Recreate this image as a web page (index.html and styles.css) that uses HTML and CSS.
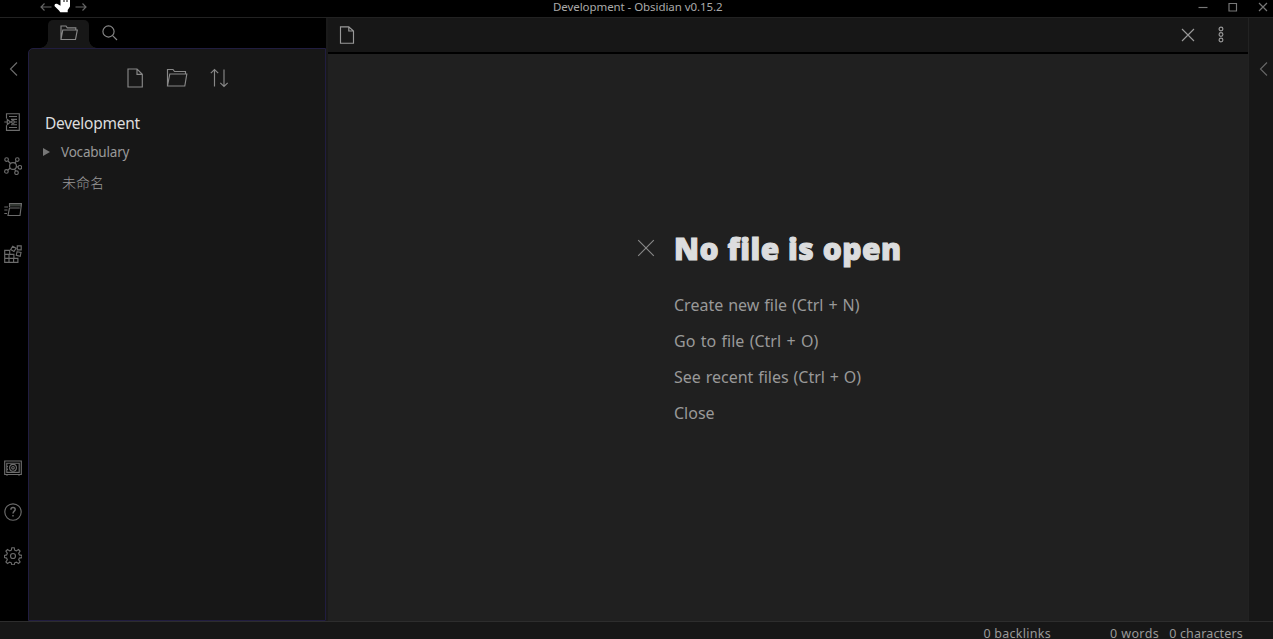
FILE: index.html
```
<!DOCTYPE html>
<html lang="en">
<head>
<meta charset="utf-8">
<title>Development - Obsidian v0.15.2</title>
<link rel="stylesheet" href="styles.css">
</head>
<body>
<div class="app">
  <header class="titlebar">
    <div class="nav">
      <svg width="12" height="10" viewBox="0 0 12 10"><path d="M11.5 5H1M4.500 1.500L1 5l3.500 3.500"/></svg>
      <svg width="12" height="10" viewBox="0 0 12 10"><path d="M.5 5H11M7.500 1.500L11 5 7.500 8.500"/></svg>
    </div>
    <div class="title"><span>Development - Obsidian v0.15.2</span></div>
    <div class="window-controls">
      <svg width="10" height="10" viewBox="0 0 10 10"><path d="M.5 5.500h9"/></svg>
      <svg width="10" height="10" viewBox="0 0 10 10"><path d="M1 1.500h7.500V9H1z"/></svg>
      <svg width="10" height="10" viewBox="0 0 10 10"><path d="M1 1l8 8M9 1L1 9"/></svg>
    </div>
  </header>
  <svg class="pointer" width="20" height="13" viewBox="0 0 20 13"><path d="M6.500 0H16v6.500l-2.300 3.500v2.200H6.300L5 10.500.7 6.200Q-.2 3.500 3 3.700l3.500 2z"/><path class="fingers" d="M10 0v2M13 0v2"/></svg>

  <div class="workspace">
    <nav class="ribbon">
      <svg class="collapse" width="9" height="14" viewBox="0 0 9 14"><path d="M8 .5L1.500 7 8 13.500"/></svg>
      <div class="group">
        <svg width="18" height="18" viewBox="0 0 18 18"><path d="M2.500 5.500V.7h12.800v16.600H2.500v-5M5 3.500h8M7 6.300h6M11 9h2M7 11.700h6M5 14.500h8M.3 9h3M3.300 6.500L6.500 9l-3.200 2.500zM6.500 9h1"/><circle cx="9" cy="9" r="1.400"/></svg>
        <svg width="18" height="18" viewBox="0 0 18 18"><circle cx="9" cy="9" r="3.400"/><circle cx="2.600" cy="2.500" r="1.800"/><circle cx="13.300" cy="2.500" r="1.800"/><circle cx="15.900" cy="10.300" r="1.800"/><circle cx="12.500" cy="15.700" r="1.800"/><circle cx="2.400" cy="14.400" r="1.800"/><path d="M4 4l2.500 2.500M12.300 4.200l-1.500 2M12.400 9.600l1.700.4M10.500 12l1.200 2M6.200 11l-2.500 2.200"/></svg>
        <svg width="18" height="18" viewBox="0 0 18 18"><path class="soft" d="M6 2.500h11.200v3H6z"/><path d="M5.500 6V2.500H17.500L16 14.500H4L5.500 7H15.800M.3 6h3.700M.3 9h3.200M.3 12.500h2.700"/></svg>
        <svg width="18" height="18" viewBox="0 0 18 18"><path d="M.7 5.300h5v4.100h4.200v4h4v4H.7zM.7 9.400h5M.7 13.400h9.200M5 9.400v8M9.600 13.400v4M8.700 1.200l3.300 2-2 3.300-3.300-2zM13.300.8h3.900v4h-3.900zM13 6.800l4 .7-.8 3.700-3.900-.8z"/></svg>
      </div>
      <div class="group lower">
        <svg width="18" height="18" viewBox="0 0 18 18"><path d="M.7 2h16.600v13.500H.7zM2.800 4.200h12.400v9.200H2.800zM3 15.500v1.300M15 15.500v1.300M2.800 7.500H4M2.800 10.300H4"/><circle cx="9" cy="8.800" r="3.400"/><circle cx="9" cy="8.800" r="1.300"/></svg>
        <svg width="18" height="18" viewBox="0 0 18 18"><circle cx="9" cy="9" r="8.200"/><path class="bold" d="M6.900 6.700c0-3 4.300-2.700 4.300-.3C11.200 8.200 9 8.100 9 10.500M9 12v1.500"/></svg>
        <svg width="18" height="18" viewBox="0 0 18 18"><path d="M7.800.7h2.400l.5 2.500 1.600.7 2.200-1.400 1.600 1.600-1.400 2.200.7 1.600 2.500.5v2.200l-2.500.5-.7 1.600 1.400 2.200-1.600 1.600-2.200-1.400-1.600.7-.5 2H7.800l-.5-2-1.600-.7-2.200 1.400-1.600-1.600 1.400-2.200-.7-1.600-2.200-.5V8.400l2.200-.5.7-1.600-1.400-2.200 1.600-1.600 2.200 1.400 1.600-.7z"/><circle cx="9" cy="9" r="2.500"/></svg>
      </div>
    </nav>

    <aside class="sidebar">
      <div class="tabs">
        <div class="tab active"><svg width="18" height="16" viewBox="0 0 18 16"><path d="M1 14.500V1h5l1.300 1.800h8.500V5M1 14.500L2.800 5h14.500l-1.800 9.500z"/></svg></div>
        <div class="tab"><svg width="16" height="16" viewBox="0 0 16 16"><circle cx="6.500" cy="6.500" r="5.600"/><path d="M10.600 10.600L15 15"/></svg></div>
      </div>
      <div class="explorer">
        <div class="actions">
          <svg width="20" height="20" viewBox="0 0 20 20"><path d="M3 1h9l5.300 5.300V19H3zM12 1v5.300h5.300"/></svg>
          <svg width="22" height="20" viewBox="0 0 22 20"><path d="M1.500 18V1.500H7L8.500 3.500h11V6M1.500 18L3.800 6h17l-2 12z"/></svg>
          <svg width="20" height="20" viewBox="0 0 20 20"><path d="M5.500 18.500V1.500M1.800 5.200l3.700-3.700 3.700 3.700M15 1.500v17M11.300 14.800l3.700 3.700 3.700-3.700"/></svg>
        </div>
        <div class="vault"><span>Development</span></div>
        <div class="row folder"><svg width="7" height="8" viewBox="0 0 7 8"><path d="M0 0l7 4-7 4z"/></svg><span>Vocabulary</span></div>
        <div class="row file"><span>未命名</span></div>
      </div>
    </aside>

    <main class="pane">
      <div class="pane-header">
        <svg width="16" height="18" viewBox="0 0 16 18"><path d="M1.500.8h8.300L14.500 5v12.200h-13zM9.800.8V5h4.700"/></svg>
        <div class="pane-actions">
          <svg width="14" height="14" viewBox="0 0 14 14"><path d="M1 1l12 12M13 1L1 13"/></svg>
          <svg width="6" height="18" viewBox="0 0 6 18"><circle cx="3" cy="3" r="1.900"/><circle cx="3" cy="8.500" r="1.900"/><circle cx="3" cy="14" r="1.900"/></svg>
        </div>
      </div>
      <div class="empty">
        <svg class="empty-x" width="18" height="18" viewBox="0 0 18 18"><path d="M1.200 1.200l15.600 15.600M16.800 1.200L1.200 16.800"/></svg>
        <div>
          <h1><span>No file is open</span></h1>
          <ul>
            <li><span class="create">Create new file (Ctrl + N)</span></li>
            <li><span class="goto">Go to file (Ctrl + O)</span></li>
            <li><span class="recent">See recent files (Ctrl + O)</span></li>
            <li><span>Close</span></li>
          </ul>
        </div>
      </div>
    </main>

    <nav class="ribbon-right"><svg width="9" height="14" viewBox="0 0 9 14"><path d="M8 .5L1.500 7 8 13.500"/></svg></nav>
  </div>

  <footer class="status"><span class="backlinks">0 backlinks</span><span class="words">0 words</span><span class="chars">0 characters</span></footer>
</div>
</body>
</html>
```
FILE: styles.css
```
* { box-sizing: border-box; }
body { margin: 0; background: #000; font-family: "Noto Sans", "Noto Sans CJK SC", sans-serif; color: #999; }
svg { display: block; flex: none; fill: none; stroke: #777; stroke-width: 1.15; }
span { white-space: nowrap; }

.app { width: 1273px; height: 639px; overflow: hidden; display: flex; flex-direction: column; position: relative; }

.titlebar { height: 18px; flex: none; display: grid; grid-template-columns: 552px auto 1fr; border-bottom: 1px solid #222; }
.nav { display: flex; gap: 23px; padding: 2px 0 0 40px; }
.nav svg { stroke: #666; }
.title { font-size: 11.500px; line-height: 14px; color: #aaa; letter-spacing: -.07px; padding-left: 1px; }
.window-controls { display: flex; justify-content: flex-end; gap: 20px; padding: 2px 5px 0 0; }
.window-controls svg { stroke: #777; }
.pointer { position: absolute; left: 54px; top: 0; fill: #fff; stroke: none; }
.pointer .fingers { stroke: #222; }

.workspace { flex: none; height: 603px; display: flex; }
.ribbon { width: 28px; display: flex; flex-direction: column; align-items: center; padding: 44px 2px 56px 0; }
.ribbon svg { stroke: #6c6c6c; }
.group { display: flex; flex-direction: column; gap: 26px; margin-top: 37px; }
.lower { margin-top: auto; }
.soft { fill: #343934; stroke: none; }
.bold { stroke-width: 1.400; }

.sidebar { width: 298px; display: flex; flex-direction: column; }
.tabs { height: 30px; display: flex; padding: 2px 0 0 20px; }
.tab { width: 41px; display: flex; justify-content: center; padding-top: 5px; }
.tab.active { background: #171717; border-radius: 5px 5px 0 0; position: relative; }
.tab.active::before, .tab.active::after { content: ""; position: absolute; bottom: 0; width: 8px; height: 8px; }
.tab.active::before { right: 100%; background: radial-gradient(circle at 0 0, transparent 7.500px, #171717 8px); }
.tab.active::after { left: 100%; background: radial-gradient(circle at 100% 0, transparent 7.500px, #171717 8px); }
.tab svg { stroke: #888; }
.explorer { flex: 1; background: #171717; border: 1px solid #211d40; border-radius: 5px 0 0 0; padding-top: 19px; }
.actions { display: flex; justify-content: center; gap: 21px; padding-right: 1px; margin-bottom: 24px; }
.actions svg { stroke: #888; }
.vault { padding-left: 16px; font-size: 15.500px; line-height: 22px; color: #dcddde; letter-spacing: -.25px; }
.row { height: 30px; display: flex; align-items: center; font-size: 13.500px; }
.folder { padding-left: 14px; gap: 11px; margin-top: 3px; letter-spacing: -.2px; }
.folder svg { fill: #777; stroke: none; }
.file { padding-left: 33px; font-size: 14px; font-family: "Noto Sans CJK SC", sans-serif; font-weight: 300; }

.pane { width: 923px; background: #202020; border-left: 2px solid #1a1a1a; border-right: 1px solid #222; display: flex; flex-direction: column; }
.pane-header { height: 36px; flex: none; background: #171717; border-bottom: 2px solid #000; display: flex; justify-content: space-between; align-items: center; padding: 0 24px 0 11px; }
.pane-actions { display: flex; align-items: center; gap: 23px; }
.pane-header svg { stroke: #999; }
.empty { display: flex; gap: 19px; padding: 175px 0 0 309px; }
.empty-x { margin-top: 10px; stroke: #888; }
h1 { margin: 0; font-family: "Noto Sans", sans-serif; font-weight: 900; font-size: 30px; line-height: 40px; color: #dcddde; letter-spacing: .5px; -webkit-text-stroke: 1.100px #dcddde; }
ul { list-style: none; margin: 18px 0 0; padding: 0; }
li { height: 36px; line-height: 36px; font-size: 16px; }
.create { word-spacing: .8px; }
.goto { word-spacing: 1.200px; }
.recent { word-spacing: .7px; }

.ribbon-right { flex: 1; background: #171717; padding: 44px 0 0 10px; }
.ribbon-right svg { stroke: #666; }
.status { flex: 1; background: #171717; border-top: 1px solid #2d2d2d; display: flex; justify-content: flex-end; padding: 3px 30px 0 0; font-size: 12.500px; line-height: 17px; }
.backlinks { margin-right: 59px; letter-spacing: .27px; }
.words { margin-right: 10px; letter-spacing: .4px; }
.chars { letter-spacing: .17px; }
```
